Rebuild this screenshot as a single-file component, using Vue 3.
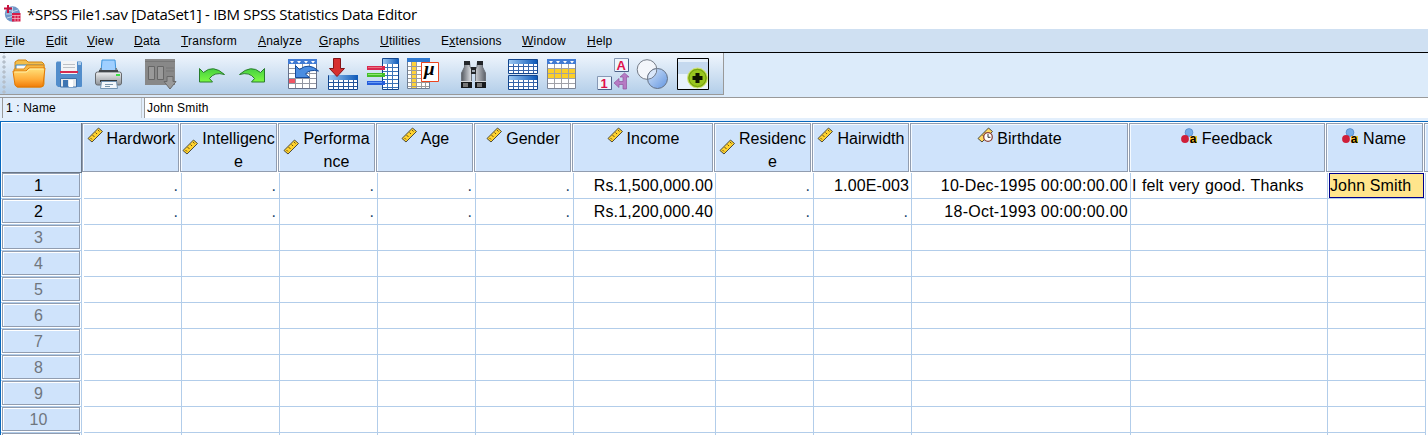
<script setup>
const menus = [
  ['File', 0, 41], ['Edit', 0, 41], ['View', 0, 47], ['Data', 0, 47],
  ['Transform', 0, 77], ['Analyze', 0, 61], ['Graphs', 0, 61], ['Utilities', 0, 61],
  ['Extensions', 1, 81], ['Window', 0, 65], ['Help', 0, 60]
].map(([label, key, width]) => ({
  before: label.slice(0, key), key: label[key], after: label.slice(key + 1), width
}))

const columns = [
  { lines: ['Hardwork'], type: 'scale', width: 98 },
  { lines: ['Intelligenc', 'e'], type: 'scale', width: 98 },
  { lines: ['Performa', 'nce'], type: 'scale', width: 98 },
  { lines: ['Age'], type: 'scale', width: 98 },
  { lines: ['Gender'], type: 'scale', width: 98 },
  { lines: ['Income'], type: 'scale', width: 142 },
  { lines: ['Residenc', 'e'], type: 'scale', width: 98 },
  { lines: ['Hairwidth'], type: 'scale', width: 98 },
  { lines: ['Birthdate'], type: 'date', width: 219 },
  { lines: ['Feedback'], type: 'nominal', width: 197 },
  { lines: ['Name'], type: 'nominal', width: 98 }
]

const data = [
  ['.', '.', '.', '.', '.', 'Rs.1,500,000.00', '.', '1.00E-003', '10-Dec-1995 00:00:00.00', 'I felt very good. Thanks', 'John Smith'],
  ['.', '.', '.', '.', '.', 'Rs.1,200,000.40', '.', '.', '18-Oct-1993 00:00:00.00', '', '']
]
const rows = Array.from({ length: 11 }, (_, i) => data[i] || Array(11).fill(''))
</script>

<template>
  <div class="window">
    <header class="title">
      <svg class="logo" width="18" height="18" viewBox="0 0 18 18">
        <circle cx="8.500" cy="9" r="7.700" fill="#6f97c8" />
        <path d="M2 9h13M8.500 2v14M4 5q5 3 10 0M3 13q5-3 11 0" stroke="#c3d3e8" fill="none" />
        <path d="M4 0v8M0 3.500h8" stroke="#c8103c" stroke-width="2" />
        <path d="M8 8h8.500v8.500H8z" fill="#d61c48" />
        <path d="M8 10.500h8.500M8 13.500h8.500M11 10v6.500M14 10v6.500" stroke="#f6c4cf" stroke-width=".7" />
      </svg>
      <span>*SPSS File1.sav [DataSet1] - IBM SPSS Statistics Data Editor</span>
    </header>

    <nav class="menu">
      <span v-for="m in menus" :key="m.key + m.after" :style="{ width: m.width + 'px' }">{{ m.before }}<u>{{ m.key }}</u>{{ m.after }}</span>
    </nav>

    <div class="toolrow">
      <svg width="0" height="0" class="defs">
        <defs>
          <linearGradient id="gold" x2="0" y2="1"><stop stop-color="#ffe27c" /><stop offset=".6" stop-color="#ffad3a" /><stop offset="1" stop-color="#f07c08" /></linearGradient>
          <linearGradient id="gray" x2="0" y2="1"><stop stop-color="#eef0f2" /><stop offset="1" stop-color="#8d9196" /></linearGradient>
          <linearGradient id="blue"><stop stop-color="#9cc8f2" /><stop offset="1" stop-color="#0c58b8" /></linearGradient>
          <linearGradient id="tube"><stop stop-color="#555a62" /><stop offset=".45" stop-color="#eef0f4" /><stop offset="1" stop-color="#5c616a" /></linearGradient>
          <linearGradient id="green" x2="0" y2="1"><stop stop-color="#45d040" /><stop offset="1" stop-color="#7dfa42" /></linearGradient>
          <linearGradient id="sky" x2="1" y2="1"><stop stop-color="#d5e6fb" /><stop offset="1" stop-color="#6295e0" /></linearGradient>
        </defs>
      </svg>
      <div class="toolbar">
        <div class="grip"></div>
        <!-- open -->
        <svg viewBox="0 0 40 42">
          <path d="M6 13V9l3-2h8l2 2h14l2 2v8H6z" fill="#f3bd4a" stroke="#d08415" />
          <path d="M7 12h27v5H7z" fill="#f8fafc" stroke="#3688c7" />
          <path d="M5 16h10l3-4h17v19q0 3-3 3H8z" fill="#f5b746" stroke="#dd8b16" />
          <path d="M4 18h13l3-3h16l-2 17q0 2-3 2H9q-2 0-3-2z" fill="url(#gold)" stroke="#e17905" />
          <path d="M5.500 19h12l3-3h14" stroke="#fff0a8" fill="none" />
        </svg>
        <!-- save -->
        <svg viewBox="0 0 40 42">
          <path d="M8 8.500h24l1 1v24l-1 .5H9l-2-2V9.500z" fill="#528dcb" />
          <path d="M12 8h16v13H12z" fill="#f2f4f6" /><path d="M11 18h18v2H11z" fill="#d52c51" />
          <path d="M14 11.500h12M14 14.500h12" stroke="#bcc0c5" />
          <path d="M11.500 25.500h16V34h-16z" fill="#e4e8ec" stroke="#3c6fa8" />
          <path d="M14 27h5v7h-5z" fill="#3f75b2" /><path d="M20 27h4v7h-4z" fill="#fff" />
          <path d="M29 9h3v3h-3z" fill="#a8cae9" />
        </svg>
        <!-- print -->
        <svg viewBox="0 0 40 42">
          <path d="M13 7h13l1 12H12z" fill="#9fcfff" stroke="#3c94dc" />
          <path d="M12 15l-4 7v8h23v-8l-4-7v5H12z" fill="#c8cbce" stroke="#72767a" />
          <path d="M6.500 21q0-2 2-2h22q2 0 2 2v9q0 2-2 2h-22q-2 0-2-2z" fill="url(#gray)" stroke="#666a6e" />
          <path d="M10 18h19" stroke="#43474b" stroke-width="2" />
          <path d="M11 28h17" stroke="#34383b" stroke-width="2" />
          <path d="M12.500 28.500h15l1 7h-17z" fill="#f2f7fc" stroke="#7295b4" />
          <path d="M16 31.500h8M16 33.500h5" stroke="#7995ab" /><path d="M27 21h4v2h-4z" fill="#3be045" />
        </svg>
        <!-- recall dialog -->
        <svg class="spaced" viewBox="0 0 40 42">
          <path d="M5 6h30v26H5z" fill="#888" />
          <path d="M5 8.500h30" stroke="#777" />
          <path d="M8.500 13.500h6v13h-6zM17.500 13.500h6v13h-6z" fill="#999" stroke="#666" />
          <path d="M26 15h8M26 18h8" stroke="#777" />
          <path d="M27 23.500h6v5h3l-6 7.500-6-7.500h3z" fill="#999" stroke="#686868" />
        </svg>
        <!-- undo -->
        <svg class="spaced" viewBox="0 0 40 42">
          <path d="M8.500 15.500l4 4Q22 11 33.500 21.500q-10-3-15 4l3 3.500h-13z" fill="url(#green)" stroke="#287d2b" />
        </svg>
        <!-- redo -->
        <svg viewBox="0 0 40 42">
          <path d="M33.500 15.500l-4 4Q20 11 8.500 21.500q10-3 15 4l-3 3.500h13z" fill="url(#green)" stroke="#287d2b" />
        </svg>
        <!-- go to case -->
        <svg class="spaced" viewBox="0 0 40 42">
          <path d="M6.500 6.500h28v29h-28z" fill="#fff" stroke="#66718a" />
          <path d="M6 6h29v5H6z" fill="#417bd4" />
          <path d="M8 8h4l-2 2.500zM15 8h4l-2 2.500zM22 8h4l-2 2.500zM29 8h4l-2 2.500z" fill="#fff" />
          <path d="M7 15.500h27M7 20.500h27M7 25.500h27M7 30.500h27M13.500 11v24M20.500 11v24M27.500 11v24" stroke="#9296a2" />
          <path d="M7 26h6v4H7z" fill="#f15463" />
          <path d="M13.500 12.500l4 4Q27 9 36.500 18q-9-2-13 3l4 3.500h-14z" fill="#4a8de1" stroke="#164c9b" />
        </svg>
        <!-- go to variable -->
        <svg viewBox="0 0 40 42">
          <path d="M6.500 22.500h29v14h-29z" fill="#fff" stroke="#12458d" />
          <path d="M7 22h29v5H7z" fill="url(#blue)" />
          <path d="M7 29.500h28M7 33.500h28M11.500 27v10M16.500 27v10M21.500 27v10M26.500 27v10M31.500 27v10" stroke="#25559b" />
          <path d="M11.500 5.500h7v10h4L15 23.500 7.500 15.500h4z" fill="#d72e2f" stroke="#851317" />
        </svg>
        <!-- variables -->
        <svg viewBox="0 0 40 42">
          <path d="M20.500 5.500h16v31h-16z" fill="#fff" stroke="#12458d" />
          <path d="M21 6h16v5H21z" fill="url(#blue)" />
          <path d="M21 14.500h15M21 18.500h15M21 22.500h15M21 26.500h15M21 30.500h15M21 34.500h15M25.500 11v25M30.500 11v25" stroke="#3b73b7" />
          <path d="M5 13h18v4H5z" fill="#d8284e" /><path d="M6 14.500h14" stroke="#e8707f" />
          <path d="M5 20h18v4H5z" fill="#44bd29" /><path d="M6 21.500h14" stroke="#8de86e" />
          <path d="M5 28h18v4H5z" fill="#265edb" /><path d="M6 29.500h14" stroke="#6a9df5" />
        </svg>
        <!-- descriptives -->
        <svg viewBox="0 0 40 42">
          <path d="M5.500 5.500h22v30h-22z" fill="#fff" stroke="#6f7f96" />
          <path d="M5 5h23v4H5z" fill="#2f78cf" />
          <path d="M10 9h4v26h-4z" fill="#ffd33a" />
          <path d="M6 13.500h21M6 17.500h21M6 21.500h21M6 25.500h21M6 29.500h21M6 33.500h21M9.500 9v26M14.500 9v26M19.500 9v26M23.500 9v26" stroke="#9b9b9b" />
          <path d="M19.500 9.500h17v19h-17z" fill="#fff" stroke="#eb451f" />
          <text x="22" y="22" class="mu">μ</text>
        </svg>
        <!-- find -->
        <svg class="spaced" viewBox="0 0 40 42">
          <path d="M11.500 8.500h5l.5 5 1.500 3V34h-10V20l3-6zM24.500 8.500h5v5.500l3 6v14h-10V16.500l1.500-3z" fill="url(#tube)" stroke="#6d727a" />
          <path d="M11 8h6v4h-6zM24 8h6v4h-6zM18 14h5v7h-5z" fill="#23262a" /><path d="M19 17h3v2h-3z" fill="#a3abb5" />
          <path d="M8 28h11v7H8zM22 28h11v7H22z" fill="#17191b" />
          <path d="M10 30h5v4h-5zM24 30h5v4h-5z" fill="#777" /><path d="M8 28.500h11M22 28.500h11" stroke="#d5d7d9" />
        </svg>
        <!-- split file -->
        <svg class="near" viewBox="0 0 40 42">
          <path d="M5.500 6.500h29v14h-29zM5.500 22.500h29v14h-29z" fill="#fff" stroke="#12458d" />
          <path d="M6 7h28v4H6zM6 23h28v4H6z" fill="url(#blue)" />
          <path d="M6 13.500h28M6 17.500h28M6 29.500h28M6 33.500h28M10.500 11v9M15.500 11v9M20.500 11v9M25.500 11v9M30.500 11v9M10.500 27v9M15.500 27v9M20.500 27v9M25.500 27v9M30.500 27v9" stroke="#3563a9" />
        </svg>
        <!-- select cases -->
        <svg viewBox="0 0 40 42">
          <path d="M4.500 6.500h28v29h-28z" fill="#fff" stroke="#7c8597" />
          <path d="M4 6h29v5H4z" fill="#417bd4" />
          <path d="M6 8h4l-2 2.500zM13 8h4l-2 2.500zM20 8h4l-2 2.500zM27 8h4l-2 2.500z" fill="#fff" />
          <path d="M5 16h27v9H5z" fill="#fccf28" />
          <path d="M5 15.500h27M5 20.500h27M5 25.500h27M5 30.500h27M11.500 11v24M18.500 11v24M25.500 11v24" stroke="#a0a1a7" />
        </svg>
        <!-- value labels -->
        <svg class="spaced" viewBox="0 0 40 42">
          <path d="M20.500 5.500h14v13h-14zM3.500 23.500h14v13h-14z" fill="#eef5fc" stroke="#8799b5" />
          <path d="M21 18.500h13.500V6M4 36.500h13.500V24" stroke="#4c6289" fill="none" />
          <text x="22.500" y="17" class="badge">A</text><text x="6.500" y="35" class="badge">1</text>
          <path d="M20 30l5-4.500v3h4V24h-3l4.500-4 4.500 4h-2.500v12H29v-4.500h-4V34.500z" fill="#b67ac4" stroke="#90559e" stroke-width=".7" />
        </svg>
        <!-- variable sets -->
        <svg viewBox="0 0 40 42">
          <circle cx="13" cy="16.500" r="9.800" fill="#f3f6fb" stroke="#747b86" />
          <circle cx="23.500" cy="25.500" r="10" fill="url(#sky)" stroke="#647286" />
          <path d="M13.500 26.300A10 10 0 0 1 22.800 15.500A9.800 9.800 0 0 1 13.500 26.300z" fill="#d9e7fa" stroke="#727c8c" />
        </svg>
        <!-- customize -->
        <svg viewBox="0 0 40 42">
          <path d="M3.500 5.500h31v31h-31z" fill="#e8f2fd" stroke="#000" />
          <path d="M4 8h30v13H4z" fill="#c5d9ef" /><path d="M4 6h30v3H4z" fill="#e7f1fb" />
          <circle cx="23.500" cy="25" r="10" fill="#98c51f" stroke="#d2e37a" /><circle cx="23.500" cy="25" r="8.500" fill="none" stroke="#739c12" />
          <path d="M21.500 20h4v3h3v4h-3v3h-4v-3h-3v-4h3z" fill="#101500" />
        </svg>
      </div>
    </div>

    <div class="editor"><div class="ref">1 : Name</div><div class="value">John Smith</div></div>

    <main class="sheet">
      <div class="heads">
        <div class="corner"></div>
        <div v-for="c in columns" :key="c.lines[0]" class="head" :class="{ double: c.lines.length > 1 }" :style="{ width: c.width - 1 + 'px' }">
          <svg v-if="c.type === 'scale'" class="vicon" viewBox="0 0 16 16">
            <path d="M1 11.500L11.500 1 15.500 4.500 5 15z" fill="#ffd22e" stroke="#4b4a3f" />
            <path d="M5.500 8l2 2M8.500 5.500l1.500 1.500M11 3l1.500 1.500M3.500 11l1.500 1.500" stroke="#6b5310" />
          </svg>
          <svg v-else-if="c.type === 'date'" class="vicon" viewBox="0 0 16 16">
            <path d="M1 11.500L11.500 1 15.500 4.500 5 15z" fill="#ffd860" stroke="#4b4a3f" />
            <path d="M5.500 8l2 2M8 5.500l1.500 1.500" stroke="#6b5310" />
            <circle cx="11" cy="10" r="4.300" fill="#fff" stroke="#8e4439" stroke-width="1.300" /><path d="M11 7v3.300h2.500" stroke="#333" fill="none" />
          </svg>
          <svg v-else class="vicon values" viewBox="0 0 16 18">
            <circle cx="8" cy="4.500" r="3.900" fill="#78aee8" stroke="#4b82c5" stroke-width=".7" /><circle cx="4" cy="11" r="3.900" fill="#cf1e39" />
            <path d="M9 8h7v7H9z" fill="#ffc62d" /><text x="8.800" y="14.500" class="nominal">a</text>
          </svg>
          <span class="name"><template v-for="(l, i) in c.lines" :key="i"><br v-if="i" />{{ l }}</template></span>
        </div>
        <div class="head tail"></div>
      </div>

      <div v-for="(r, i) in rows" :key="i" class="row">
        <div class="numcell"><div class="num" :class="{ used: i < 2 }">{{ i < 10 ? i + 1 : '' }}</div></div>
        <div v-for="(v, j) in r" :key="j" class="cell"
          :class="{ dot: v === '.', left: j > 8, selected: i === 0 && j === 10, feedback: j === 9, date: j === 8 }"
          :style="{ width: columns[j].width + 'px' }"><span>{{ v }}</span></div>
      </div>
    </main>
  </div>
</template>

<style>
body { margin: 0; overflow: hidden; }
</style>

<style scoped>
* { box-sizing: border-box; }
.window { width: 1428px; height: 435px; overflow: hidden; background: #fff; color: #000; font-family: "Liberation Sans", Arial, sans-serif; }
.title { height: 29px; display: flex; align-items: center; padding-left: 4px; font: 15px/29px "Open Sans", "Noto Sans", sans-serif; white-space: pre; }
.title span { margin-left: 5px; letter-spacing: -.3px; }
.logo { margin-top: -1px; }
.menu { height: 23px; background: #cfe0f2; display: flex; padding-left: 5px; font-size: 12px; line-height: 24px; letter-spacing: .2px; }
.menu span { flex: none; }
.menu u { text-underline-offset: 1px; }
.toolrow { height: 46px; border-top: 1px solid #000; border-bottom: 1px solid #999; background: #dcebfa; }
.defs { display: block; }
.toolbar { width: 724px; height: 42px; display: flex; background: linear-gradient(#f0f6fd, #b3cee9); border-right: 1px solid #999; border-bottom: 1px solid #999; }
.toolbar svg { width: 40px; height: 42px; flex: none; }
.grip { width: 9px; background: radial-gradient(circle at 4px 3px, #b5bfca 1.500px, transparent 1.700px) 0 1px / 9px 5px; }
.toolbar .spaced { margin-left: 11px; }
.toolbar .near { margin-left: 10px; }
.mu { font: italic bold 19px "Liberation Serif", serif; }
.badge { font: bold 13px "Liberation Sans", sans-serif; fill: #e0104c; }
.nominal { font: bold 12px "Liberation Sans", sans-serif; }
.editor { height: 23px; display: flex; gap: 2px; padding-left: 2px; background: #e3effc; font-size: 12px; line-height: 21px; letter-spacing: .15px; }
.ref { width: 140px; height: 20px; border: 1px solid #999; border-width: 0 1px 0 1px; border-right-color: #c4cbd2; padding-left: 3px; }
.value { flex: 1; height: 20px; background: #fff; border-left: 1px solid #999; padding-left: 2px; }
.sheet { height: 314px; border: solid #0868bd; border-width: 1px 0 0 1px; padding-top: 1px; background: #fff; overflow: hidden; }
.heads { height: 50px; display: flex; gap: 1px; }
.corner { width: 80px; flex: none; height: 50px; margin-left: 1px; margin-right: -1px; border-right: 1px solid #6a7787; border-bottom: 1px solid #6a7787; background: #cfe3fb; }
.head { flex: none; height: 49px; border: 1px solid #919db0; background: #cfe3fb; box-shadow: inset 1px 1px #f5faff; display: flex; justify-content: center; align-items: flex-start; padding: 3px 0 0 1px; font-size: 16px; line-height: 23px; letter-spacing: .05px; }
.tail { width: 20px; }
.vicon { width: 16px; height: 16px; margin-right: 4px; flex: none; }
.vicon.values { height: 18px; margin: 1px 5px 0 -2px; overflow: visible; }
.double .vicon { margin-top: 12px; margin-left: -1px; }
.name { text-align: center; white-space: nowrap; }
.row { display: flex; height: 26px; }
.numcell { width: 81px; flex: none; padding-left: 1px; border-right: 1px solid #b2cdea; border-bottom: 1px solid #b2cdea; margin-right: 2px; }
.num { width: 78px; height: 24px; border: 1px solid #919db0; background: #cfe3fb; box-shadow: inset 1px 1px #fff; text-align: center; padding-right: 5px; font-size: 16px; line-height: 23px; color: #6f767e; }
.num.used { color: #000; }
.cell { flex: none; border-right: 1px solid #b2cdea; border-bottom: 1px solid #b2cdea; text-align: right; padding-right: 2px; font-size: 16px; line-height: 25px; letter-spacing: .12px; white-space: nowrap; }
.cell.date { letter-spacing: .25px; }
.cell.left { text-align: left; padding-left: 1px; }
.cell.dot { padding-right: 3px; color: #23456b; }
.cell.feedback { word-spacing: .8px; letter-spacing: .1px; }
.cell.selected { padding: 0 0 0 1px; }
.selected span { display: block; width: 95px; height: 25px; background: #ffe58c; border: 1px solid #00008b; line-height: 23px; }
</style>
